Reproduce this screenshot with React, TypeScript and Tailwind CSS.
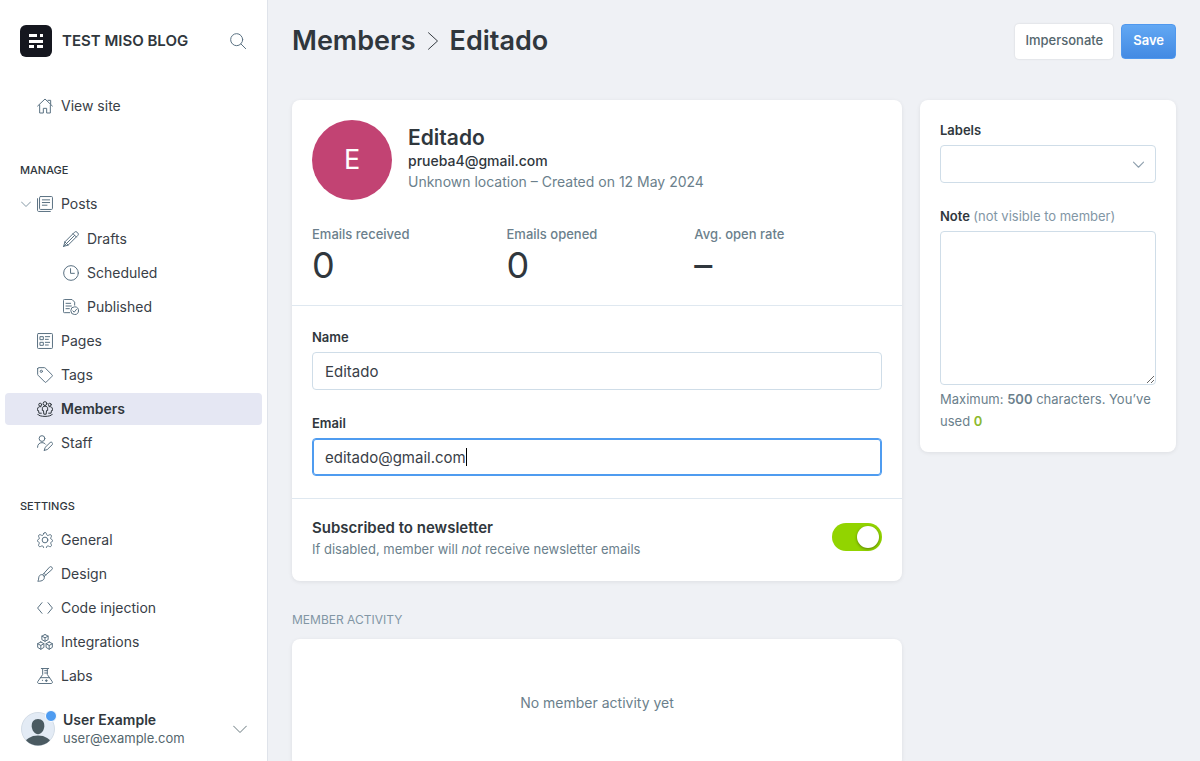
import type { ReactNode } from 'react';
import { useState } from 'react';

function Icon({ children, className = 'size-4', strokeWidth = 1.5 }: {
  children: ReactNode;
  className?: string;
  strokeWidth?: number;
}) {
  return (
    <svg
      viewBox="0 0 24 24"
      fill="none"
      stroke="currentColor"
      strokeWidth={strokeWidth}
      strokeLinecap="round"
      strokeLinejoin="round"
      aria-hidden="true"
      className={`${className} shrink-0`}
    >
      {children}
    </svg>
  );
}

const icons = {
  house: (
    <>
      <path d="M1 12 12 1.5 23 12" />
      <path d="M16.500 3.500h4v5.500" />
      <path d="M4 10.500V22.500h5.500v-7h5v7H20V10.500" />
    </>
  ),
  posts: (
    <>
      <rect x="3.800" y="0.800" width="19.400" height="19.400" rx="1.500" />
      <path d="M.8 4v17.700c0 .8.700 1.500 1.500 1.500H20M8 5.800h11M8 9.800h11M8 13.800h7" />
    </>
  ),
  pencil: (
    <>
      <path d="M1 23l1.800-6.700L17.300 1.800a2.700 2.700 0 0 1 3.800 0l1.100 1.100a2.700 2.700 0 0 1 0 3.800L7.700 21.200 1 23Z" />
      <path d="m15 4 5 5M2.800 16.300l4.900 4.900M17.500 6.500 5.500 18.500M1 23l3-3" />
    </>
  ),
  clock: (
    <>
      <circle cx="12" cy="12" r="11" />
      <path d="M11.300 5.500V12.500H17" />
    </>
  ),
  published: (
    <>
      <path d="M10 20.500H2a1.300 1.300 0 0 1-1.300-1.300V2A1.300 1.300 0 0 1 2 .7h11.500l4 4v4.500M4.500 6.500h7M4.500 10.500h8M4.500 14.500h5" />
      <circle cx="17.500" cy="17.500" r="5.800" />
      <path d="m14.800 17.800 2 2 3.500-4.300" />
    </>
  ),
  pages: (
    <>
      <rect x="0.800" y="0.800" width="22.400" height="22.400" rx="1.200" />
      <rect x="5" y="5.500" width="4.500" height="4.500" />
      <rect x="5" y="14" width="4.500" height="4.500" />
      <path d="M12.500 5.500H19M12.500 9.500H17M12.500 14H19M12.500 18H17" />
    </>
  ),
  tag: (
    <>
      <path d="M1 2.500A1.500 1.500 0 0 1 2.500 1h8.700c.4 0 .8.200 1.100.5l10.300 10.300a1.500 1.500 0 0 1 0 2.100l-8.700 8.700a1.500 1.500 0 0 1-2.100 0L1.500 12.300a1.500 1.500 0 0 1-.5-1.100V2.500Z" />
      <circle cx="6.500" cy="6.500" r="1.700" />
    </>
  ),
  members: (
    <>
      <circle cx="12" cy="3.800" r="2.800" />
      <circle cx="4.800" cy="5.500" r="2.200" />
      <circle cx="19.200" cy="5.500" r="2.200" />
      <path d="M12 7.500c-2.600 0-4 1.800-4 4.300v2.500h1.700l.6 5.500h3.400l.6-5.500H16v-2.500c0-2.500-1.400-4.300-4-4.300Z" />
      <path d="M6 8.500C3 7.800.8 9.500.8 12.300v2h1.500l.6 4h3.600M18 8.500c3-.7 5.200 1 5.200 3.800v2h-1.500l-.6 4h-3.600" />
      <path d="M1 20c1.500 4.300 20.500 4.300 22 0" />
    </>
  ),
  staff: (
    <>
      <circle cx="7.500" cy="5.300" r="4.300" />
      <path d="M.8 18.500c0-4.500 2.700-7 6.700-7 2.200 0 4 .8 5.200 2.300" />
      <path d="m11 23 1.100-4.300 7.600-7.400a2 2 0 0 1 2.900 0l.3.300a2 2 0 0 1 0 2.900l-7.600 7.400L11 23Z" />
    </>
  ),
  gear: (
    <>
      <circle cx="12" cy="12" r="4.300" />
      <path d="M10 2.200a2.100 2.100 0 0 1 4 0l.4 1.500a2.100 2.100 0 0 0 2.900 1.200l1.400-.7a2.100 2.100 0 0 1 2.800 2.800l-.7 1.400a2.100 2.100 0 0 0 1.200 2.900l.3.100c1.700.6 1.700 2.600 0 3.200l-.3.100a2.100 2.100 0 0 0-1.200 2.900l.7 1.400a2.100 2.100 0 0 1-2.800 2.800l-1.400-.7a2.100 2.100 0 0 0-2.900 1.200l-.4 1.500a2.100 2.100 0 0 1-4 0l-.4-1.500a2.100 2.100 0 0 0-2.900-1.200l-1.400.7a2.100 2.100 0 0 1-2.800-2.800l.7-1.400a2.100 2.100 0 0 0-1.200-2.900l-.3-.1c-1.700-.6-1.700-2.600 0-3.200l.3-.1a2.100 2.100 0 0 0 1.200-2.900L2.500 7a2.100 2.100 0 0 1 2.800-2.800l1.400.7a2.100 2.100 0 0 0 2.900-1.200L10 2.200Z" />
    </>
  ),
  brush: (
    <>
      <path d="M8.500 13.200 18.700 1.800a2.500 2.500 0 0 1 3.600 3.600L10.800 15.500" />
      <path d="M10.800 15.500c1.500 4.500-2.300 7.700-9.800 7.300 2-1.500 1-4.300 2-7 .9-2.400 3.500-3.400 5.500-2.600l2.300 2.300ZM10.500 11l2.500 2.500" />
    </>
  ),
  code: <path d="M7.500 4 .9 12l6.600 8M16.500 4l6.600 8-6.600 8" />,
  boxes: (
    <>
      <path d="m12 .8 4.700 2.400v5.300L12 11 7.300 8.500V3.200L12 .8ZM7.300 3.200 12 5.700l4.700-2.500M12 5.700V11" />
      <path d="m5.700 12 4.700 2.500v5.600l-4.700 2.800L1 20.100v-5.600L5.700 12ZM1 14.500l4.700 2.700 4.700-2.700M5.700 17.200v5.700" />
      <path d="m18.300 12 4.700 2.500v5.600l-4.700 2.800-4.700-2.800v-5.600l4.700-2.500ZM13.600 14.500l4.700 2.700 4.700-2.700M18.300 17.200v5.700" />
    </>
  ),
  flask: (
    <>
      <path d="M6.500.8h11M8.500.8v9L1.200 20.300c-.9 1.500 0 3 1.700 3h18.200c1.700 0 2.600-1.500 1.700-3L15.500 9.800v-9M11.500 4h4M11.500 7.500h4M5 14.500h14" />
      <path d="M8 18.500h.5M14 17.500v3M12.500 19h3" />
    </>
  ),
  search: (
    <>
      <circle cx="10" cy="10" r="9" />
      <path d="m16.500 16.500 7 7" />
    </>
  ),
  chevronDown: <path d="m1 7 11 11L23 7" />,
  chevronRight: <path d="m6 1 12 11L6 23" />,
};

type IconName = keyof typeof icons;

function NavItem({ icon, label, active = false, nested = false, expandable = false }: {
  icon: IconName;
  label: string;
  active?: boolean;
  nested?: boolean;
  expandable?: boolean;
}) {
  return (
    <li className="flex items-center">
      <a
        href="#"
        aria-current={active ? 'page' : undefined}
        className={`flex h-8 flex-1 items-center gap-2 rounded ${nested ? 'pl-[58px]' : expandable ? 'pl-4' : 'pl-8'} ${
          active ? 'bg-[#e5e7f3] font-semibold text-[#30373d]' : 'text-[#394047]'
        }`}
      >
        {expandable && (
          <span className="-mr-0.5 text-[#7a8e9c]">
            <Icon className="size-2.5" strokeWidth={2.200}>{icons.chevronDown}</Icon>
          </span>
        )}
        <span className={active ? 'text-[#30373d]' : 'text-[#5a7182]'}>
          <Icon>{icons[icon]}</Icon>
        </span>
        {label}
      </a>
    </li>
  );
}

function Stat({ label, value }: { label: string; value: string }) {
  return (
    <div>
      <dt className="text-[13px] leading-[22px] font-medium text-[#6b7f8c]">{label}</dt>
      <dd className="text-4xl leading-10 text-[#30373d]">{value}</dd>
    </div>
  );
}

function Sidebar() {
  return (
    <aside className="flex h-screen w-[268px] shrink-0 flex-col border-r border-[#dfe3ea] bg-white">
      <header className="flex items-center pt-[25px] pr-[21px] pb-[33px] pl-5">
        <svg viewBox="0 0 32 32" className="size-8" aria-hidden="true">
          <rect width="32" height="32" rx="6" fill="#15171f" />
          <path fill="#fff" d="M9 9h8v3H9zM20 9h3v3h-3zM9 15h14v3H9zM9 20h5v3H9zM17 20h6v3h-6z" />
        </svg>
        <span className="ml-2.5 flex-1 text-[15px] font-semibold text-[#30373d]">TEST MISO BLOG</span>
        <button type="button" aria-label="Search" className="text-[#5a7182]">
          <Icon>{icons.search}</Icon>
        </button>
      </header>

      <nav className="flex-1 px-[5px] text-sm">
        <ul>
          <NavItem icon="house" label="View site" />
        </ul>
        <h2 className="mt-[38px] mb-2 px-[15px] text-[11px] leading-5 font-medium text-[#30373d]">MANAGE</h2>
        <ul className="flex flex-col gap-0.5">
          <NavItem icon="posts" label="Posts" expandable />
          <li className="pt-px">
            <ul className="flex flex-col gap-0.5">
              <NavItem icon="pencil" label="Drafts" nested />
              <NavItem icon="clock" label="Scheduled" nested />
              <NavItem icon="published" label="Published" nested />
            </ul>
          </li>
          <NavItem icon="pages" label="Pages" />
          <NavItem icon="tag" label="Tags" />
          <NavItem icon="members" label="Members" active />
          <NavItem icon="staff" label="Staff" />
        </ul>
        <h2 className="mt-[37px] mb-2 px-[15px] text-[11px] leading-5 font-medium text-[#30373d]">SETTINGS</h2>
        <ul className="flex flex-col gap-0.5">
          <NavItem icon="gear" label="General" />
          <NavItem icon="brush" label="Design" />
          <NavItem icon="code" label="Code injection" />
          <NavItem icon="boxes" label="Integrations" />
          <NavItem icon="flask" label="Labs" />
        </ul>
      </nav>

      <button type="button" className="flex items-center pr-5 pb-3.5 pl-[21px] text-left">
        <span className="relative">
          <svg viewBox="0 0 34 34" className="size-[34px]" aria-hidden="true">
            <defs>
              <clipPath id="avatar-clip">
                <circle cx="17" cy="17" r="16.500" />
              </clipPath>
            </defs>
            <circle cx="17" cy="17" r="16.500" fill="#e3ebf5" stroke="#d3dce6" />
            <g clipPath="url(#avatar-clip)" fill="#4a5a61">
              <path d="M17 7c4.200 0 6.500 3 6.300 7.300-.2 4.200-3 8-6.300 8s-6.100-3.800-6.300-8C10.500 10 12.800 7 17 7Z" />
              <ellipse cx="17" cy="32" rx="13" ry="8.500" />
            </g>
          </svg>
          <span className="absolute -top-0.5 -right-0.5 size-3 rounded-full border border-white bg-[#4f9cf0]" />
        </span>
        <span className="ml-2 flex-1">
          <span className="block text-sm leading-[18px] font-semibold text-[#30373d]">User Example</span>
          <span className="block text-[13px] leading-[18px] text-[#54666d]">user@example.com</span>
        </span>
        <span className="text-[#54666d]">
          <Icon className="size-3.5">{icons.chevronDown}</Icon>
        </span>
      </button>
    </aside>
  );
}

const card = 'rounded-lg bg-white shadow-[0_1px_4px_rgba(0,0,0,0.08)]';
const fieldLabel = 'block text-[13px] leading-5 font-semibold text-[#30373d]';
const field = 'mt-[5px] block h-[38px] w-full rounded border bg-white px-3 text-[15px] text-[#394047] outline-none';

export default function App() {
  const [name, setName] = useState('Editado');
  const [email, setEmail] = useState('editado@gmail.com');
  const [subscribed, setSubscribed] = useState(true);
  const [note, setNote] = useState('');

  return (
    <div className="flex h-screen bg-[#eff1f5] font-['Inter',sans-serif] text-[#30373d]">
      <Sidebar />
      <main className="h-screen flex-1 overflow-y-auto px-6 [scrollbar-width:none]">
        <header className="flex items-center justify-between pt-[23px] pb-[41px]">
          <h1 className="flex items-center text-[27px] leading-9 font-semibold">
            <a href="#">Members</a>
            <span className="mx-2">
              <Icon className="size-[18px]" strokeWidth={1.300}>{icons.chevronRight}</Icon>
            </span>
            Editado
          </h1>
          <div className="flex gap-2">
            <button
              type="button"
              className="h-[35px] rounded bg-white px-2.5 text-[13px] font-medium text-[#54666d] shadow-[0_0_2px_rgba(0,0,0,0.15)]"
            >
              Impersonate
            </button>
            <button
              type="button"
              className="h-[35px] rounded border border-[#4f98ee] bg-linear-to-b from-[#62a8f3] to-[#438ae3] px-[11px] text-[13px] font-semibold text-white"
            >
              Save
            </button>
          </div>
        </header>

        <div className="flex items-start gap-[18px]">
          <div className="min-w-0 flex-1">
            <section className={card}>
              <div className="border-b border-[#dfe8f0] px-5 py-5">
                <div className="flex items-center gap-4">
                  <div className="flex size-20 items-center justify-center rounded-full bg-[#c24373] text-[27px] text-white">E</div>
                  <div className="pb-0.5">
                    <h2 className="text-[21px] leading-6 font-semibold">Editado</h2>
                    <p className="text-sm leading-[22px] font-medium">prueba4@gmail.com</p>
                    <p className="text-sm leading-5 text-[#6b7f8c]">Unknown location – Created on 12 May 2024</p>
                  </div>
                </div>
                <dl className="mt-[23px] flex gap-[97px]">
                  <Stat label="Emails received" value="0" />
                  <Stat label="Emails opened" value="0" />
                  <Stat label="Avg. open rate" value="–" />
                </dl>
              </div>

              <form className="flex flex-col gap-[23px] border-b border-[#dfe8f0] px-5 pt-[21px] pb-[22px]">
                <div>
                  <label htmlFor="name" className={fieldLabel}>Name</label>
                  <input id="name" type="text" value={name} onChange={(e) => setName(e.target.value)} className={`${field} border-[#cfdde8]`} />
                </div>
                <div>
                  <label htmlFor="email" className={fieldLabel}>Email</label>
                  <div className="relative">
                    <input
                      id="email"
                      type="text"
                      value={email}
                      onChange={(e) => setEmail(e.target.value)}
                      className={`${field} border-[#4f9cf0] caret-transparent inset-ring inset-ring-[#4f9cf0]`}
                    />
                    <span aria-hidden="true" className="pointer-events-none absolute top-2.5 left-[154px] h-[18px] w-px bg-black" />
                  </div>
                </div>
              </form>

              <div className="flex items-center justify-between px-5 pt-[17px] pb-[23px]">
                <div>
                  <h3 className="text-[15px] leading-6 font-semibold">Subscribed to newsletter</h3>
                  <p className="text-[13px] leading-[18px] text-[#6b7f8c]">
                    If disabled, member will <em>not</em> receive newsletter emails
                  </p>
                </div>
                <label className="relative h-7 w-[50px] shrink-0 cursor-pointer">
                  <input
                    type="checkbox"
                    role="switch"
                    aria-label="Subscribed to newsletter"
                    checked={subscribed}
                    onChange={(e) => setSubscribed(e.target.checked)}
                    className="peer sr-only"
                  />
                  <span className="flex h-7 items-center rounded-full bg-gray-300 px-[3px] peer-checked:justify-end peer-checked:bg-[#92d400]">
                    <span className="size-[22px] rounded-full bg-white shadow-[0_1px_3px_rgba(0,0,0,0.4)]" />
                  </span>
                </label>
              </div>
            </section>

            <h2 className="mt-[29px] mb-[9px] text-xs leading-5 text-[#8296a5]">MEMBER ACTIVITY</h2>
            <section className={`${card} flex h-32 items-center justify-center text-sm text-[#6b7f8c]`}>No member activity yet</section>
          </div>

          <section className={`${card} w-64 shrink-0 p-5`}>
            <label htmlFor="labels" className={fieldLabel}>Labels</label>
            <div className="relative">
              <select id="labels" className={`${field} appearance-none border-[#cfdde8]`}>
                <option />
              </select>
              <span className="pointer-events-none absolute top-3.5 right-3 text-[#8fa0ae]">
                <Icon className="size-[11px]" strokeWidth={2.400}>{icons.chevronDown}</Icon>
              </span>
            </div>
            <label htmlFor="note" className={`${fieldLabel} mt-[23px]`}>
              Note <span className="font-normal text-[#8296a5]">(not visible to member)</span>
            </label>
            <textarea
              id="note"
              value={note}
              onChange={(e) => setNote(e.target.value)}
              className="mt-[5px] block h-[154px] w-full resize rounded border border-[#cfdde8] px-3 py-2 text-[15px] outline-none"
            />
            <p className="mt-[3px] text-[13px] leading-[22px] text-[#6b7f8c]">
              Maximum: <strong className="font-semibold">500</strong> characters. You’ve used{' '}
              <strong className="font-semibold text-[#8db92e]">{note.length}</strong>
            </p>
          </section>
        </div>
      </main>
    </div>
  );
}
